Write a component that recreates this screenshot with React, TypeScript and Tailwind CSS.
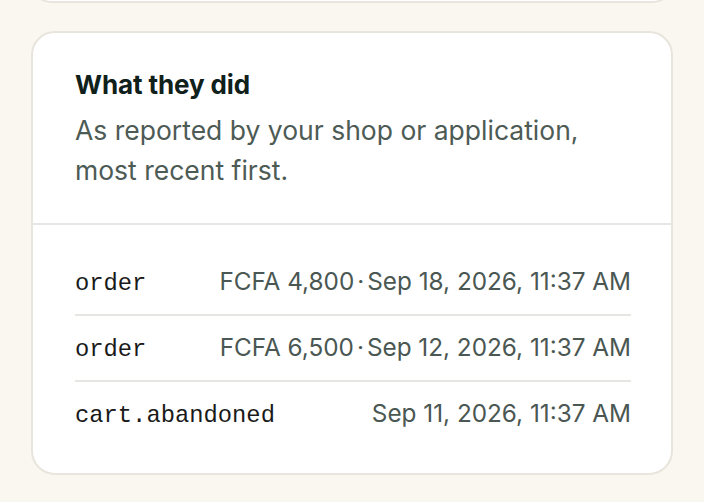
import React from "react";

const rows = [
  { name: "order", amount: "FCFA 4,800", date: "Sep 18, 2026, 11:37 AM" },
  { name: "order", amount: "FCFA 6,500", date: "Sep 12, 2026, 11:37 AM" },
  { name: "cart.abandoned", amount: "", date: "Sep 11, 2026, 11:37 AM" },
];

export default function App() {
  return (
    <div className="h-[502px] w-[704px] overflow-hidden bg-[#faf7f0] flex flex-col" style={{ fontFamily: "Inter, 'Noto Sans', sans-serif" }}>
      <div className="ml-[31px] w-[642px] h-[40px] mt-[-37px] shrink-0 rounded-[24px] border-2 border-[#e7e5dc] bg-white" />
      <div className="ml-[31px] mt-[28px] w-[642px] shrink-0 rounded-[24px] border-2 border-[#e7e5dc] bg-white">
        <div className="pl-[42px] pr-[40px] pt-[36px] pb-[33px] border-b-2 border-[#e6e6e3]">
          <h2 className="text-[26px] leading-[32px] font-bold tracking-[-0.1px] text-[#10201b]">What they did</h2>
          <p className="mt-[9px] text-[26.5px] leading-[40px] text-[#4d5b55]">
            As reported by your shop or application,
            <br />
            most recent first.
          </p>
        </div>
        <div className="pl-[42px] pr-[40px] pt-[25px] pb-[27px]">
          {rows.map((r, i) => (
            <div
              key={i}
              className={`flex items-center ${i < rows.length - 1 ? "h-[66px] border-b-2 border-[#e6e6e3]" : "h-[64px]"}`}
            >
              <div className="flex w-full items-baseline justify-between">
                <span className="text-[23.8px] text-[#1a1a1a]" style={{ fontFamily: "'Liberation Mono', monospace" }}>
                  {r.name}
                </span>
                <span className="text-[24.3px] text-[#4a5752] flex items-baseline">
                  {r.amount && (
                    <>
                      <span>{r.amount}</span>
                      <span className="mx-[3px]">·</span>
                    </>
                  )}
                  <span>{r.date}</span>
                </span>
              </div>
            </div>
          ))}
        </div>
      </div>
      <div className="ml-[31px] mt-[27px] w-[642px] h-[60px] shrink-0 rounded-[24px] border-2 border-[#e7e5dc] bg-white" />
    </div>
  );
}
